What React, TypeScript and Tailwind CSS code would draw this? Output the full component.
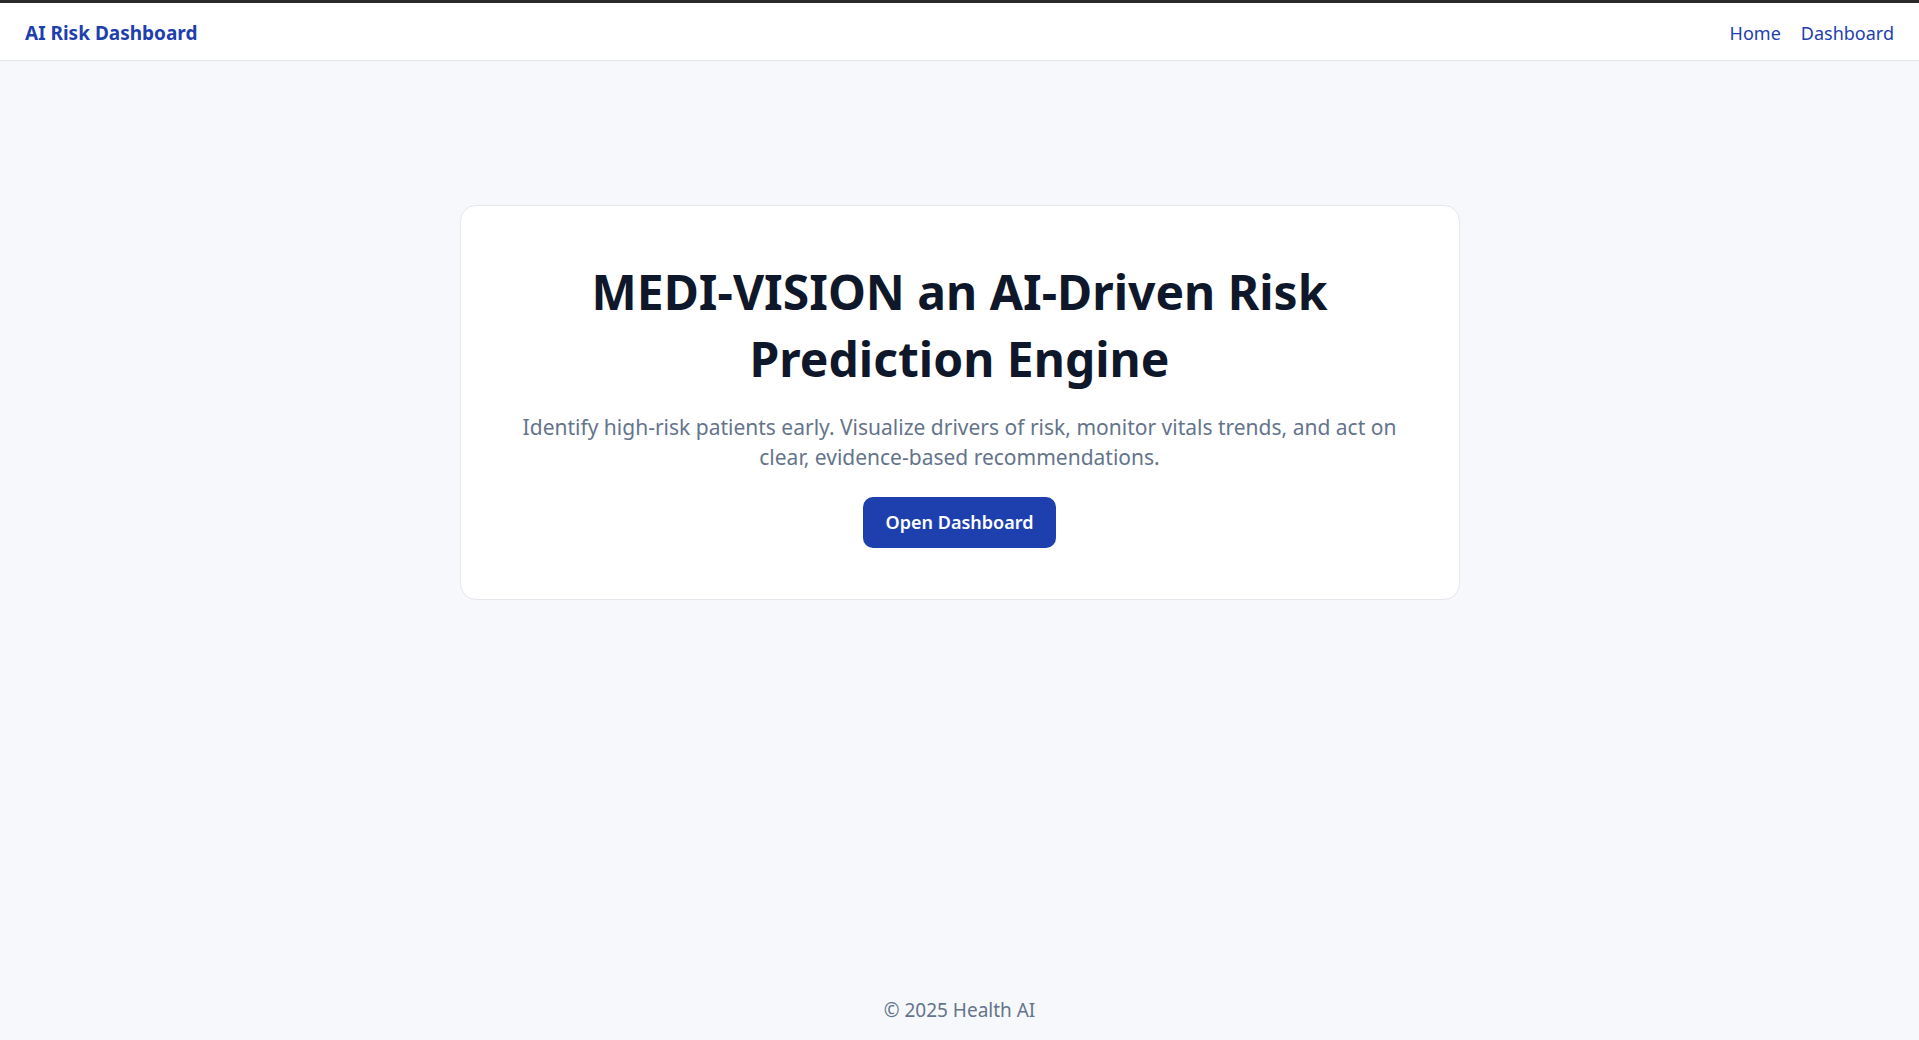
export default function App() {
  return (
    <div
      className="min-h-screen flex flex-col bg-[#f7f8fb] border-t-[3px] border-[#2a2a2a]"
      style={{ fontFamily: '"Noto Sans", "Open Sans", sans-serif' }}
    >
      <header className="h-[58px] bg-white border-b border-[#e2e5ea] flex items-center justify-between px-[25px] pt-[4px]">
        <span className="text-[19px] font-bold text-[#1e40af]">AI Risk Dashboard</span>
        <nav className="flex items-center gap-[20px] text-[18px] text-[#1e40af]">
          <a href="#">Home</a>
          <a href="#">Dashboard</a>
        </nav>
      </header>

      <main className="flex-1 flex justify-center pt-[144px]">
        <div className="w-[1000px] h-fit bg-white border border-[#e4e7ec] rounded-[16px] px-[48px] pt-[52px] pb-[51px] text-center">
          <h1 className="text-[48px] leading-[67px] font-bold text-[#0f172a]">
            MEDI-VISION an AI-Driven Risk
            <br />
            Prediction Engine
          </h1>
          <p className="mt-[20px] text-[21px] leading-[30px] text-[#64748b]">
            Identify high-risk patients early. Visualize drivers of risk, monitor vitals trends, and act on clear,
            evidence-based recommendations.
          </p>
          <button className="mt-[25px] h-[51px] px-[23px] rounded-[10px] bg-[#1e40af] text-white text-[18px] font-semibold">
            Open Dashboard
          </button>
        </div>
      </main>

      <footer className="h-[60px] flex items-center justify-center text-[19px] text-[#64748b]">
        © 2025 Health AI
      </footer>
    </div>
  );
}
